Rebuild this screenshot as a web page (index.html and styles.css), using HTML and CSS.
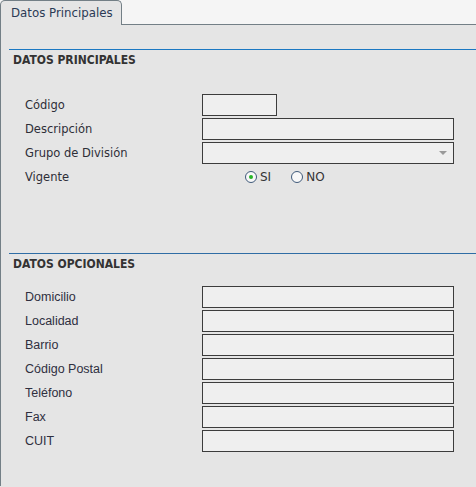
FILE: index.html
```html
<!DOCTYPE html>
<html lang="es">
<head>
    <meta charset="UTF-8">
    <title>Datos Principales</title>
    <link rel="stylesheet" href="styles.css">
</head>
<body>

    <div class="tabs">
        <div class="tab">Datos Principales</div>
    </div>

    <div class="panel">
        <div class="section">
            <h3>DATOS PRINCIPALES</h3>
            <div class="form main-form">
                <label>Código</label>
                <div><input type="text" class="short"></div>
                <label>Descripción</label>
                <div><input type="text"></div>
                <label>Grupo de División</label>
                <div class="select"></div>
                <label>Vigente</label>
                <div class="radios">
                    <label class="radio"><input type="radio" name="vigente" checked> SI</label>
                    <label class="radio"><input type="radio" name="vigente"> NO</label>
                </div>
            </div>
        </div>

        <div class="section second">
            <h3>DATOS OPCIONALES</h3>
            <div class="form opt-form">
                <label>Domicilio</label>
                <div><input type="text"></div>
                <label>Localidad</label>
                <div><input type="text"></div>
                <label>Barrio</label>
                <div><input type="text"></div>
                <label>Código Postal</label>
                <div><input type="text"></div>
                <label>Teléfono</label>
                <div><input type="text"></div>
                <label>Fax</label>
                <div><input type="text"></div>
                <label>CUIT</label>
                <div><input type="text"></div>
            </div>
        </div>
    </div>

</body>
</html>
```

FILE: styles.css
```css
body {
    margin: 0;
    font-family: "DejaVu Sans", sans-serif;
    font-size: 11.5px;
    color: #2e2e38;
    background-color: #e5e5e5;
}

.tabs {
    height: 25px;
    background-color: #f5f5f5;
    border-bottom: 1px solid #737f86;
    padding-top: 1px;
    box-sizing: border-box;
    display: flex;
    align-items: flex-end;
}

.tab {
    width: 122px;
    height: 25px;
    box-sizing: border-box;
    margin-bottom: -1px;
    padding: 5px 0 0 10px;
    background-color: #e5e5e5;
    border: 1px solid #737f86;
    border-bottom: none;
    border-radius: 5px 5px 0 0;
    color: #2b3a55;
    font-size: 11.8px;
}

.panel {
    height: 461px;
    border-left: 1px solid #737f86;
    overflow: hidden;
}

.section {
    margin: 24px 0 0 8px;
    border-top: 1px solid #1b78c2;
}

.section.second {
    margin-top: 65px;
    border-top-color: #2f6da5;
}

h3 {
    margin: 0;
    padding: 2px 0 0 4px;
    font-family: "DejaVu Sans Condensed", "DejaVu Sans", sans-serif;
    font-size: 12px;
    font-weight: bold;
    color: #333;
    height: 16px;
    line-height: 16px;
}

.form {
    display: grid;
    grid-template-columns: 177px 252px;
    grid-auto-rows: 22px;
    row-gap: 2px;
    padding-left: 16px;
    align-items: center;
}

.main-form {
    margin-top: 26px;
}

.opt-form {
    margin-top: 14px;
}

.opt-form > label {
    font-family: "Liberation Sans", Arial, sans-serif;
    font-size: 12.5px;
    color: #2f2f3f;
}

.form > div {
    height: 22px;
}

input[type="text"] {
    width: 252px;
    height: 22px;
    box-sizing: border-box;
    margin: 0;
    border: 1px solid #3c3c3c;
    background-color: #efefef;
    display: block;
}

input.short {
    width: 75px;
}

.select {
    position: relative;
    width: 252px;
    box-sizing: border-box;
    border: 1px solid #3c3c3c;
    background-color: #efefef;
}

.select::after {
    content: "";
    position: absolute;
    right: 6px;
    top: 8px;
    border-left: 4px solid transparent;
    border-right: 4px solid transparent;
    border-top: 4px solid #9a9a9a;
}

.radios {
    display: flex;
    align-items: center;
    padding-left: 43px;
    gap: 20px;
}

.radio {
    display: flex;
    align-items: center;
    gap: 3px;
    font-size: 12px;
    color: #333;
}

.radio input {
    appearance: none;
    width: 12px;
    height: 12px;
    margin: 0;
    border: 1px solid #405a7a;
    border-radius: 50%;
    background-color: #f8f8f8;
    position: relative;
}

.radio input:checked::after {
    content: "";
    position: absolute;
    left: 3px;
    top: 3px;
    width: 4px;
    height: 4px;
    border-radius: 50%;
    background-color: #26b526;
}
```
